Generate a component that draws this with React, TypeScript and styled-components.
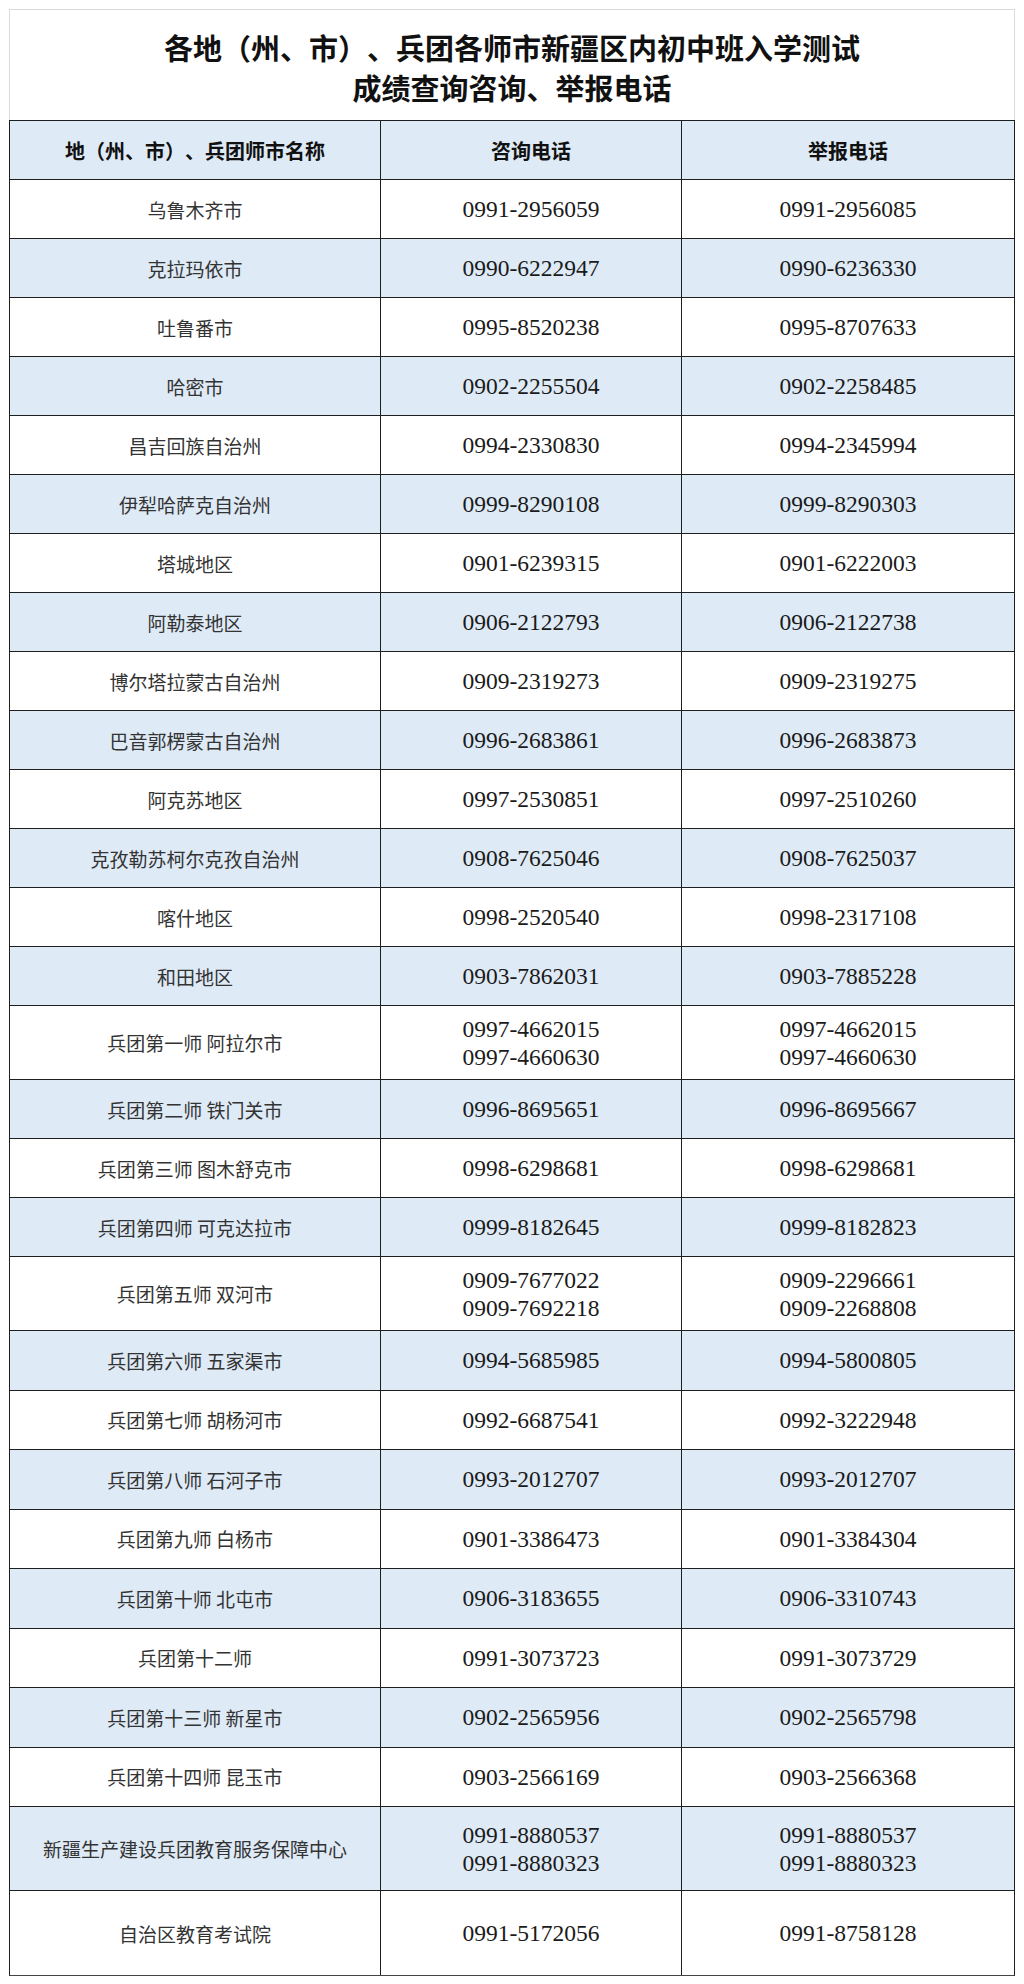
import { FC } from "react";
import styled, { createGlobalStyle } from "styled-components";

type Entry = {
  name: string;
  consult: string[];
  report: string[];
  height?: number;
};

const rows: Entry[] = [
  { name: "乌鲁木齐市", consult: ["0991-2956059"], report: ["0991-2956085"] },
  { name: "克拉玛依市", consult: ["0990-6222947"], report: ["0990-6236330"] },
  { name: "吐鲁番市", consult: ["0995-8520238"], report: ["0995-8707633"] },
  { name: "哈密市", consult: ["0902-2255504"], report: ["0902-2258485"] },
  { name: "昌吉回族自治州", consult: ["0994-2330830"], report: ["0994-2345994"] },
  { name: "伊犁哈萨克自治州", consult: ["0999-8290108"], report: ["0999-8290303"] },
  { name: "塔城地区", consult: ["0901-6239315"], report: ["0901-6222003"] },
  { name: "阿勒泰地区", consult: ["0906-2122793"], report: ["0906-2122738"] },
  { name: "博尔塔拉蒙古自治州", consult: ["0909-2319273"], report: ["0909-2319275"] },
  { name: "巴音郭楞蒙古自治州", consult: ["0996-2683861"], report: ["0996-2683873"] },
  { name: "阿克苏地区", consult: ["0997-2530851"], report: ["0997-2510260"] },
  { name: "克孜勒苏柯尔克孜自治州", consult: ["0908-7625046"], report: ["0908-7625037"] },
  { name: "喀什地区", consult: ["0998-2520540"], report: ["0998-2317108"] },
  { name: "和田地区", consult: ["0903-7862031"], report: ["0903-7885228"] },
  {
    name: "兵团第一师 阿拉尔市",
    consult: ["0997-4662015", "0997-4660630"],
    report: ["0997-4662015", "0997-4660630"],
    height: 74,
  },
  { name: "兵团第二师 铁门关市", consult: ["0996-8695651"], report: ["0996-8695667"] },
  { name: "兵团第三师 图木舒克市", consult: ["0998-6298681"], report: ["0998-6298681"] },
  { name: "兵团第四师 可克达拉市", consult: ["0999-8182645"], report: ["0999-8182823"] },
  {
    name: "兵团第五师 双河市",
    consult: ["0909-7677022", "0909-7692218"],
    report: ["0909-2296661", "0909-2268808"],
    height: 74,
  },
  { name: "兵团第六师 五家渠市", consult: ["0994-5685985"], report: ["0994-5800805"], height: 59.5 },
  { name: "兵团第七师 胡杨河市", consult: ["0992-6687541"], report: ["0992-3222948"], height: 59.5 },
  { name: "兵团第八师 石河子市", consult: ["0993-2012707"], report: ["0993-2012707"], height: 59.5 },
  { name: "兵团第九师 白杨市", consult: ["0901-3386473"], report: ["0901-3384304"], height: 59.5 },
  { name: "兵团第十师 北屯市", consult: ["0906-3183655"], report: ["0906-3310743"], height: 59.5 },
  { name: "兵团第十二师", consult: ["0991-3073723"], report: ["0991-3073729"], height: 59.5 },
  { name: "兵团第十三师 新星市", consult: ["0902-2565956"], report: ["0902-2565798"], height: 59.5 },
  { name: "兵团第十四师 昆玉市", consult: ["0903-2566169"], report: ["0903-2566368"], height: 59.5 },
  {
    name: "新疆生产建设兵团教育服务保障中心",
    consult: ["0991-8880537", "0991-8880323"],
    report: ["0991-8880537", "0991-8880323"],
    height: 84,
  },
  { name: "自治区教育考试院", consult: ["0991-5172056"], report: ["0991-8758128"], height: 84 },
];

const App: FC = () => {
  return (
    <Page>
      <GlobalStyle />
      <TitleBox>
        <TitleLine>各地（州、市）、兵团各师市新疆区内初中班入学测试</TitleLine>
        <TitleLine>成绩查询咨询、举报电话</TitleLine>
      </TitleBox>
      <Table>
        <Row $shaded $height={59}>
          <HeadCell>地（州、市）、兵团师市名称</HeadCell>
          <HeadCell>咨询电话</HeadCell>
          <HeadCell>举报电话</HeadCell>
        </Row>
        {rows.map((row, i) => (
          <Row key={row.name} $shaded={i % 2 === 1} $height={row.height ?? 59}>
            <NameCell>{row.name}</NameCell>
            <PhoneCell>
              {row.consult.map((p) => (
                <span key={p}>{p}</span>
              ))}
            </PhoneCell>
            <PhoneCell>
              {row.report.map((p) => (
                <span key={p}>{p}</span>
              ))}
            </PhoneCell>
          </Row>
        ))}
      </Table>
    </Page>
  );
};

export default App;

const GlobalStyle = createGlobalStyle`
  html, body {
    margin: 0;
    padding: 0;
    background: #ffffff;
  }
  * {
    box-sizing: border-box;
  }
`;

const Page = styled.div`
  width: 1024px;
  min-height: 1984px;
  padding: 9px 0 0 9px;
  background: #ffffff;
  text-spacing-trim: space-all;
`;

const TitleBox = styled.div`
  width: 1006px;
  height: 111px;
  border: 1px solid #dadada;
  border-bottom: none;
  display: flex;
  flex-direction: column;
  align-items: center;
  justify-content: center;
  padding-top: 4px;
  font-family: "Noto Sans CJK SC", sans-serif;
  font-weight: 700;
  font-size: 29px;
  line-height: 40px;
  color: #111111;
  text-spacing-trim: space-all;
`;

const TitleLine = styled.div``;

const Table = styled.div`
  width: 1006px;
  border: 1px solid #1e1e1e;
  border-bottom-color: #444444;
`;

const Row = styled.div<{ $shaded: boolean; $height: number }>`
  display: grid;
  grid-template-columns: 371px 301px 1fr;
  height: ${(p) => p.$height}px;
  background: ${(p) => (p.$shaded ? "#deeaf6" : "#ffffff")};
  border-bottom: 1px solid #1e1e1e;
  &:last-child {
    border-bottom: none;
  }
`;

const Cell = styled.div`
  display: flex;
  flex-direction: column;
  align-items: center;
  justify-content: center;
  border-right: 1px solid #1e1e1e;
  &:last-child {
    border-right: none;
  }
`;

const HeadCell = styled(Cell)`
  font-family: "Noto Sans CJK SC", sans-serif;
  font-weight: 700;
  font-size: 20px;
  color: #111111;
  text-spacing-trim: space-all;
`;

const NameCell = styled(Cell)`
  font-family: "Noto Sans CJK SC", sans-serif;
  font-size: 19px;
  color: #333333;
`;

const PhoneCell = styled(Cell)`
  font-family: "Liberation Serif", "Times New Roman", serif;
  font-size: 23.5px;
  line-height: 28px;
  color: #1a1a1a;
`;
